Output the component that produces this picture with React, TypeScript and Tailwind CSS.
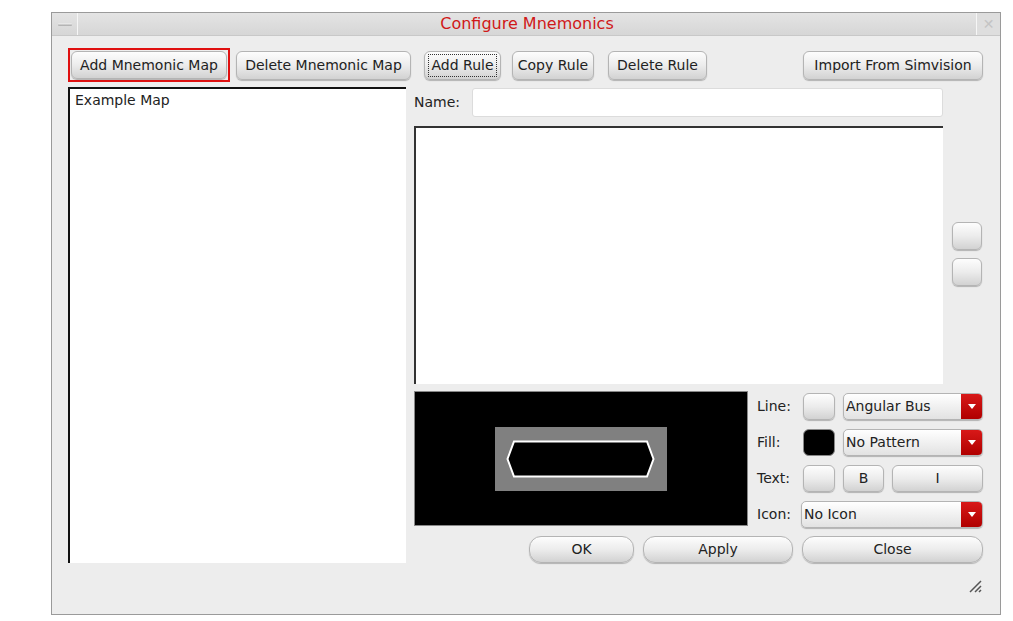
import React from 'react';

const font = { fontFamily: '"DejaVu Sans", "Noto Sans", sans-serif' };

const btn =
  'flex items-center justify-center rounded-[6px] border border-[#b4b4b4] bg-gradient-to-b from-[#fdfdfd] via-[#ececec] to-[#d2d2d2] text-[14px] text-[#222] shadow-[0_1px_1px_rgba(0,0,0,0.25)]';

const Combo: React.FC<{ label: string; className: string }> = ({ label, className }) => (
  <div
    className={`flex items-stretch overflow-hidden rounded-[5px] border border-[#b4b4b4] bg-gradient-to-b from-[#ffffff] to-[#e2e2e2] shadow-[0_1px_1px_rgba(0,0,0,0.25)] ${className}`}
  >
    <div className="flex flex-1 items-center pl-[2px] text-[14px] text-[#222]">{label}</div>
    <div className="flex w-[21px] items-center justify-center bg-gradient-to-b from-[#d81818] to-[#b00000]">
      <svg width="8" height="5" viewBox="0 0 8 5">
        <path d="M0 0h8L4 5z" fill="#fff" />
      </svg>
    </div>
  </div>
);

const App: React.FC = () => {
  return (
    <div className="min-h-[621px] bg-white pl-[51px] pt-[12px]" style={font}>
      <div className="flex h-[603px] w-[950px] flex-col border border-[#9a9a9a] bg-[#ededed]">
        {/* Title bar */}
        <div className="flex h-[23px] items-stretch border-b border-[#c8c8c8] bg-gradient-to-b from-[#e4e4e4] to-[#d6d6d6]">
          <div className="flex w-[26px] items-center justify-center border-r border-[#f6f6f6]">
            <div className="h-[3px] w-[14px] rounded-[1px] bg-gradient-to-b from-[#f4f4f4] to-[#a8a8a8]" />
          </div>
          <div className="flex flex-1 items-center justify-center text-[16px] text-[#d01818]">
            Configure Mnemonics
          </div>
          <div className="flex w-[24px] items-center justify-center border-l border-[#f6f6f6] bg-[#dedede] text-[14px] text-[#c4c4c4]">
            ✕
          </div>
        </div>

        {/* Body */}
        <div className="flex flex-1 flex-col pl-[16px] pr-[17px] pt-[13px]">
          {/* Toolbar */}
          <div className="flex h-[32px] items-center">
            <div className="flex h-[34px] w-[162px] items-center justify-center border-2 border-[#e01010]">
              <div className={`${btn} h-[28px] w-[156px]`}>Add Mnemonic Map</div>
            </div>
            <div className={`${btn} ml-[6px] h-[29px] w-[175px]`}>Delete Mnemonic Map</div>
            <div className={`${btn} ml-[13px] h-[29px] w-[77px]`}>
              <span className="border border-dotted border-[#333] px-[2px] leading-[21px]">Add Rule</span>
            </div>
            <div className={`${btn} ml-[11px] h-[29px] w-[82px]`}>Copy Rule</div>
            <div className={`${btn} ml-[14px] h-[29px] w-[99px]`}>Delete Rule</div>
            <div className={`${btn} ml-auto h-[29px] w-[180px]`}>Import From Simvision</div>
          </div>

          <div className="mt-[6px] flex">
            {/* Map list */}
            <div className="h-[476px] w-[338px] border-l-2 border-t-2 border-[#111] bg-white pl-[5px] pt-[1px] text-[14px] text-[#222]">
              Example Map
            </div>

            {/* Right side */}
            <div className="ml-[8px] flex flex-1 flex-col">
              <div className="flex h-[30px] items-center">
                <span className="w-[58px] text-[14px] text-[#222]">Name:</span>
                <div className="h-[29px] w-[471px] rounded-[3px] border border-[#dcdcdc] bg-white" />
              </div>

              <div className="mt-[9px] flex">
                <div className="h-[258px] w-[529px] border-l-2 border-t-2 border-[#333] bg-white" />
                <div className="ml-[9px] flex flex-col gap-[8px] pt-[96px]">
                  <div className={`${btn} h-[28px] w-[30px]`} />
                  <div className={`${btn} h-[28px] w-[30px]`} />
                </div>
              </div>

              <div className="mt-[7px] flex">
                {/* Preview */}
                <div className="flex h-[135px] w-[334px] items-center justify-center border border-[#888] bg-black">
                  <div className="flex h-[64px] w-[172px] items-center justify-center bg-[#808080]">
                    <svg width="150" height="40" viewBox="0 0 150 40">
                      <path
                        d="M8 2.5H141L147.5 20L141 37.5H8L1.5 20Z"
                        fill="#000"
                        stroke="#fff"
                        strokeWidth="2"
                      />
                    </svg>
                  </div>
                </div>

                {/* Style form */}
                <div className="ml-[9px] flex flex-1 flex-col gap-[8px] pt-[1px]">
                  <div className="flex h-[28px] items-center">
                    <span className="w-[46px] text-[14px] text-[#222]">Line:</span>
                    <div className={`${btn} h-[27px] w-[32px]`} />
                    <Combo label="Angular Bus" className="ml-[8px] h-[27px] flex-1" />
                  </div>
                  <div className="flex h-[28px] items-center">
                    <span className="w-[46px] text-[14px] text-[#222]">Fill:</span>
                    <div className="h-[27px] w-[32px] rounded-[6px] border border-[#888] bg-black" />
                    <Combo label="No Pattern" className="ml-[8px] h-[27px] flex-1" />
                  </div>
                  <div className="flex h-[28px] items-center">
                    <span className="w-[46px] text-[14px] text-[#222]">Text:</span>
                    <div className={`${btn} h-[27px] w-[32px]`} />
                    <div className={`${btn} ml-[8px] h-[27px] w-[41px]`}>B</div>
                    <div className={`${btn} ml-[8px] h-[27px] flex-1`}>I</div>
                  </div>
                  <div className="flex h-[28px] items-center">
                    <span className="w-[44px] text-[14px] text-[#222]">Icon:</span>
                    <Combo label="No Icon" className="h-[27px] flex-1" />
                  </div>
                </div>
              </div>

              {/* Dialog buttons */}
              <div className="mt-[8px] flex justify-end gap-[9px]">
                <div className={`${btn} h-[27px] w-[105px] rounded-[12px]`}>OK</div>
                <div className={`${btn} h-[27px] w-[150px] rounded-[12px]`}>Apply</div>
                <div className={`${btn} h-[27px] w-[181px] rounded-[12px]`}>Close</div>
              </div>
            </div>
          </div>

          {/* Resize grip */}
          <div className="mt-[14px] flex justify-end pr-[1px]">
            <svg width="16" height="16" viewBox="0 0 16 16">
              <path d="M15 4L4 15M15 9L9 15M15 13L13 15" stroke="#555" strokeWidth="1.5" />
            </svg>
          </div>
        </div>
      </div>
    </div>
  );
};

export default App;
